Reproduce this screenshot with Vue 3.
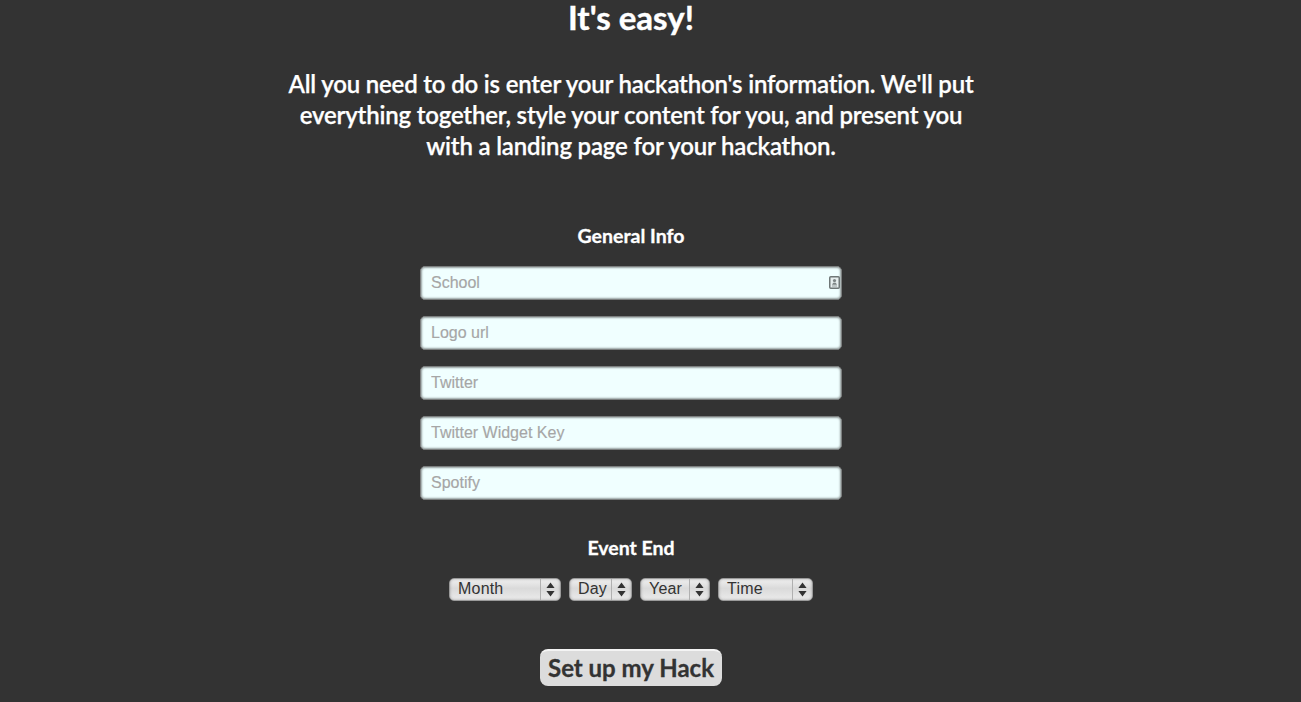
<script setup>
const fields = ['School', 'Logo url', 'Twitter', 'Twitter Widget Key', 'Spotify']
const selects = [
  { label: 'Month', width: 112 },
  { label: 'Day', width: 63 },
  { label: 'Year', width: 70 },
  { label: 'Time', width: 95 }
]
</script>

<template>
  <main class="page">
    <h1 class="title">It's easy!</h1>
    <p class="intro">All you need to do is enter your hackathon's information. We'll put<br />everything together, style your content for you, and present you<br />with a landing page for your hackathon.</p>
    <form class="form" @submit.prevent>
      <h2 class="section first">General Info</h2>
      <div class="fields">
        <div v-for="(f, i) in fields" :key="f" class="field">
          <input class="input" type="text" :placeholder="f" />
          <svg v-if="i === 0" class="contact" width="11" height="13" viewBox="0 0 11 13">
            <rect x="0.75" y="0.75" width="9.5" height="11.5" rx="1" fill="#e6eeee" stroke="#6f7777" stroke-width="1.5" />
            <circle cx="5.5" cy="4.6" r="1.6" fill="#7d8585" />
            <path d="M3 8.8 L4.2 6.8 H6.8 L8 8.8 Z" fill="#7d8585" />
            <rect x="3" y="9.4" width="5" height="1.2" fill="#a5adad" />
          </svg>
        </div>
      </div>
      <h2 class="section second">Event End</h2>
      <div class="selects">
        <div v-for="s in selects" :key="s.label" class="select" :style="{ width: s.width + 'px' }">
          <span class="select-label">{{ s.label }}</span>
          <span class="select-arrows">
            <svg width="9" height="15" viewBox="0 0 9 15">
              <path d="M4.5 0.5 L8.6 6 H0.4 Z M0.4 9 H8.6 L4.5 14.5 Z" fill="#333" />
            </svg>
          </span>
        </div>
      </div>
      <button class="submit" type="submit">Set up my Hack</button>
    </form>
  </main>
</template>

<style>
html, body { margin: 0; background: #333333; }
</style>

<style scoped>
.page {
  box-sizing: border-box;
  height: 702px;
  padding-right: 39px;
  overflow: hidden;
  background: #333333;
  color: #fff;
  font-family: Lato, "Open Sans", sans-serif;
  text-align: center;
}
.title {
  margin: 0;
  font-size: 33px;
  line-height: 35px;
  font-weight: 700;
  -webkit-text-stroke: 0.4px #fff;
}
.intro {
  margin: 33px 0 0;
  font-size: 24px;
  line-height: 31px;
  font-weight: 600;
  letter-spacing: -0.18px;
  -webkit-text-stroke: 0.25px #fff;
}
.form {
  display: flex;
  flex-direction: column;
  align-items: center;
}
.section {
  margin: 0;
  font-size: 19.5px;
  line-height: 24px;
  font-weight: 700;
  -webkit-text-stroke: 0.3px #fff;
}
.first { margin-top: 63px; }
.second { margin-top: 36px; }
.fields {
  display: flex;
  flex-direction: column;
  gap: 16px;
  margin-top: 18px;
}
.field { position: relative; width: 422px; height: 34px; }
.input {
  box-sizing: border-box;
  display: block;
  width: 100%;
  height: 100%;
  padding: 0 10px;
  border: 1px solid #7c7f7f;
  border-radius: 5px;
  background: #f0ffff;
  box-shadow: inset 0 0 2px 1px rgba(0, 0, 0, 0.38);
  font-family: "Liberation Sans", Arial, sans-serif;
  font-size: 16px;
  color: #333;
  outline: none;
}
.input::placeholder { color: #a6a6a6; opacity: 1; -webkit-text-stroke: 0.15px #a6a6a6; }
.contact { position: absolute; right: 2px; top: 10px; }
.selects {
  display: flex;
  justify-content: center;
  gap: 8px;
  margin-top: 18px;
}
.select {
  box-sizing: border-box;
  display: flex;
  height: 23px;
  border: 1px solid #9a9a9a;
  border-radius: 5px;
  background: linear-gradient(#f0f0f0, #dadada 45%, #ebebeb);
  box-shadow: inset 0 0 3px rgba(0, 0, 0, 0.28);
  color: #333;
  font-family: "Liberation Sans", Arial, sans-serif;
  font-size: 16px;
  line-height: 20px;
}
.select-label { flex: 1; padding-left: 8px; text-align: left; letter-spacing: 0.2px; }
.select-arrows {
  display: flex;
  align-items: center;
  justify-content: center;
  width: 19px;
  border-left: 1px solid #b0b0b0;
}
.submit {
  margin-top: 48px;
  width: 182px;
  height: 37px;
  padding: 0 0 2px;
  border: none;
  border-top: 2px solid #f4f4f4;
  border-radius: 8px;
  background: #dcdcdc;
  color: #333;
  font-family: Lato, sans-serif;
  font-size: 24px;
  line-height: 32px;
  font-weight: 700;
  -webkit-text-stroke: 0.3px #333;
}
</style>
